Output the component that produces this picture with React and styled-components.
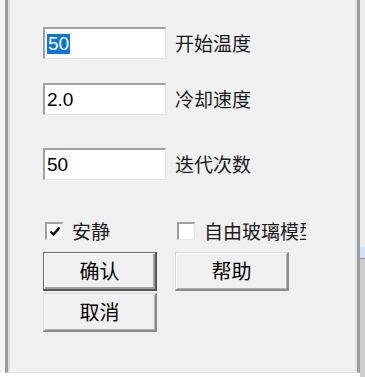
import styled, { createGlobalStyle } from "styled-components";

const GlobalStyle = createGlobalStyle`
  html, body {
    margin: 0;
    padding: 0;
    background: #ffffff;
  }
`;

const Screen = styled.div`
  display: flex;
  align-items: flex-start;
  width: 365px;
  height: 377px;
  overflow: hidden;
  font-family: "Noto Sans CJK SC", "Liberation Sans", sans-serif;
`;

const Gap = styled.div`
  width: 5px;
  flex: none;
  background: #f4f4f4;
  height: 373px;
`;

const Panel = styled.div`
  width: 355px;
  height: 373px;
  flex: none;
  box-sizing: border-box;
  background: #f0f0f0;
  border-left: 3px solid #9c9c9c;
  border-right: 3px solid #9c9c9c;
  border-bottom: 1px solid #e2e2e2;
  box-shadow: inset 2px 0 #dcdcdc, inset -2px 0 #e4e4e4;
  padding: 27px 0 0 35px;
  display: flex;
  flex-direction: column;
`;

const SideStrip = styled.div`
  width: 5px;
  flex: none;
  display: flex;
  flex-direction: column;
  height: 377px;
`;

const StripPart = styled.div`
  height: ${(p) => p.$h}px;
  flex: ${(p) => (p.$h ? "none" : "1")};
  background: ${(p) => p.$bg};
  border-top: ${(p) => (p.$line ? "1px solid #8a8a8a" : "none")};
`;

const FieldRow = styled.div`
  display: flex;
  align-items: center;
  gap: 9px;
  margin-top: ${(p) => p.$top || 0}px;
`;

const Field = styled.div`
  width: 123px;
  height: 32px;
  box-sizing: border-box;
  background: #ffffff;
  border-top: 2px solid #a0a0a0;
  border-left: 2px solid #a0a0a0;
  border-right: 1px solid #e3e3e3;
  border-bottom: 1px solid #e3e3e3;
  padding-left: 2px;
  display: flex;
  align-items: center;
  font-family: "Liberation Sans", Arial, sans-serif;
  font-size: 19px;
  color: #000;
`;

const Selected = styled.span`
  background: #0a74da;
  color: #ffffff;
  line-height: 20px;
  padding: 0 1px;
`;

const Label = styled.span`
  font-size: 19px;
  color: #1a1a1a;
  line-height: 1.25;
  white-space: nowrap;
`;

const CheckRow = styled.div`
  display: grid;
  grid-template-columns: 132px 131px;
  margin-top: 39px;
  height: 24px;
  align-items: center;
`;

/* the second option is cut by the dialog's control width, as in the original */
const CheckItem = styled.div`
  display: flex;
  align-items: center;
  gap: 9px;
  padding-left: 2px;
  overflow: ${(p) => (p.$clip ? "hidden" : "visible")};
  white-space: nowrap;
`;

const Box = styled.div`
  width: 18px;
  height: 18px;
  flex: none;
  box-sizing: border-box;
  background: #ffffff;
  border-top: 2px solid #a0a0a0;
  border-left: 2px solid #a0a0a0;
  border-right: 1px solid #e6e6e6;
  border-bottom: 1px solid #e6e6e6;
  display: flex;
  align-items: center;
  justify-content: center;
`;

const ButtonGrid = styled.div`
  display: grid;
  grid-template-columns: 114px 114px;
  column-gap: 18px;
  row-gap: 2px;
  margin-top: 9px;
  align-items: start;
`;

const Button = styled.div`
  height: 39px;
  box-sizing: border-box;
  background: #f0f0f0;
  border-top: 1px solid ${(p) => (p.$default ? "#6a6a6a" : "#d8d8d8")};
  border-left: 1px solid ${(p) => (p.$default ? "#6a6a6a" : "#d8d8d8")};
  border-right: 2px solid ${(p) => (p.$default ? "#555" : "#8a8a8a")};
  border-bottom: 2px solid ${(p) => (p.$default ? "#555" : "#8a8a8a")};
  box-shadow: ${(p) =>
    p.$default
      ? "inset 1px 1px #ffffff, inset -2px -2px #a0a0a0"
      : "inset 1px 1px #ffffff, inset -1px -1px #b4b4b4"};
  display: flex;
  align-items: center;
  justify-content: center;
  font-size: 20px;
  color: #000;
  padding-bottom: 2px;
`;

function Check() {
  return (
    <svg width="12" height="11" viewBox="0 0 12 11">
      <path d="M1.5 5.5 L4.5 8.5 L10.5 1.5" fill="none" stroke="#000" strokeWidth="2.4" />
    </svg>
  );
}

export default function App() {
  return (
    <>
      <GlobalStyle />
      <Screen>
        <Gap />
        <Panel>
          <FieldRow>
            <Field>
              <Selected>50</Selected>
            </Field>
            <Label>开始温度</Label>
          </FieldRow>
          <FieldRow $top={24}>
            <Field>2.0</Field>
            <Label>冷却速度</Label>
          </FieldRow>
          <FieldRow $top={33}>
            <Field>50</Field>
            <Label>迭代次数</Label>
          </FieldRow>

          <CheckRow>
            <CheckItem>
              <Box>
                <Check />
              </Box>
              <Label>安静</Label>
            </CheckItem>
            <CheckItem $clip>
              <Box />
              <Label>自由玻璃模型</Label>
            </CheckItem>
          </CheckRow>

          <ButtonGrid>
            <Button $default>确认</Button>
            <Button>帮助</Button>
            <Button>取消</Button>
          </ButtonGrid>
        </Panel>
        <SideStrip>
          <StripPart $h={247} $bg="#ececec" />
          <StripPart $h={11} $bg="#cfe2f6" />
          <StripPart $bg="#cfcfcf" $line />
        </SideStrip>
      </Screen>
    </>
  );
}
